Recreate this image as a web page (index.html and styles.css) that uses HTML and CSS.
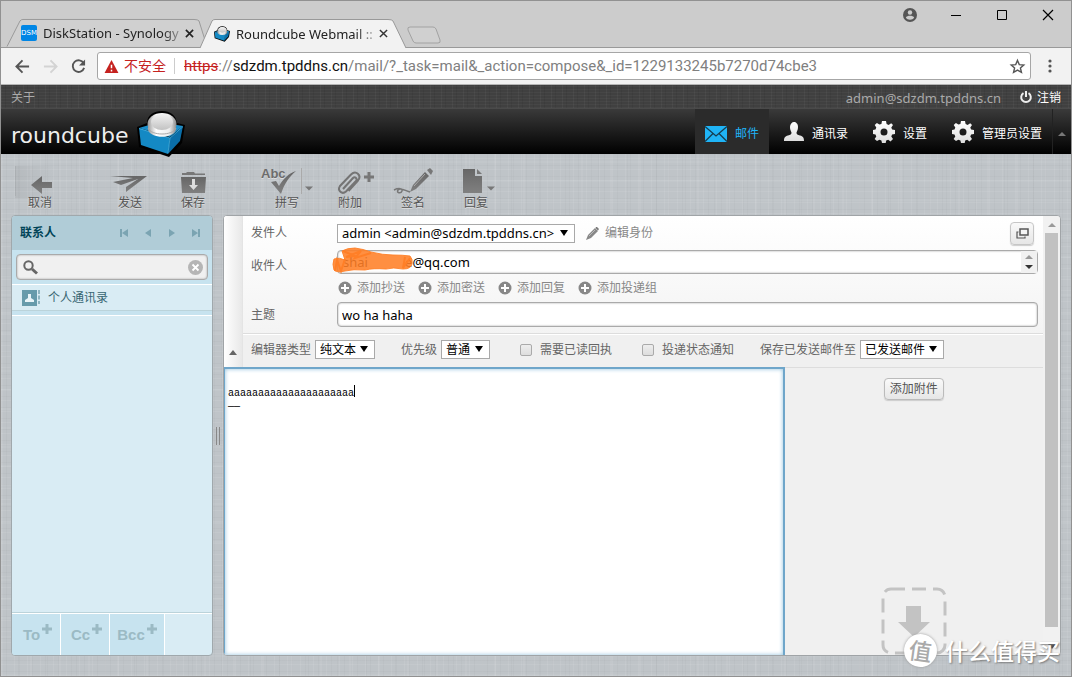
FILE: index.html
```html
<!DOCTYPE html>
<html lang="zh-CN">
<head>
<meta charset="utf-8">
<title>Roundcube Webmail :: 撰写</title>
<link rel="stylesheet" href="styles.css">
</head>
<body>
<svg class="defs" aria-hidden="true">
  <defs>
    <linearGradient id="grey" x1="0" y1="0" x2="0" y2="1"><stop offset="0" stop-color="#666"/><stop offset="1" stop-color="#808080"/></linearGradient>
    <linearGradient id="white" x1="0" y1="0" x2="0" y2="1"><stop offset="0" stop-color="#fff"/><stop offset="1" stop-color="#ddd"/></linearGradient>
    <linearGradient id="band" x1="0" y1="0" x2="1" y2="0"><stop offset="0" stop-color="#999"/><stop offset=".3" stop-color="#fff"/><stop offset=".75" stop-color="#eee"/><stop offset="1" stop-color="#8a8a8a"/></linearGradient>
    <linearGradient id="dish" x1="0" y1="0" x2="0" y2="1"><stop offset="0" stop-color="#f2f2f2"/><stop offset="1" stop-color="#c2c2c2"/></linearGradient>
    <symbol id="cube" viewBox="0 0 48 46">
      <path d="M0 16 10 12C10 4 17 0 25 0s14 4 15 12l8 2-3 18-13 14L2 36Z" fill="#000"/>
      <path d="M2 17 22 11l24 4-13 11Z" fill="#1c8fcb"/>
      <path d="M2 17 33 27 31 43 4 34Z" fill="#1489c4"/>
      <path d="M33 27 46 15 43 30 31 43Z" fill="#0a6ea8"/>
      <path d="M2 17.500 33 27 46 15.500M33 27 31 42" fill="none" stroke="#45b0e0" stroke-width=".8"/>
      <path d="M11 13v6c3 9 25 9 28 0v-6Z" fill="url(#band)"/>
      <ellipse cx="25" cy="13" rx="14.500" ry="11" fill="url(#band)"/>
      <path d="M11 17c3 8 25 8 28 0" fill="none" stroke="#aaa"/>
      <ellipse cx="25" cy="11" rx="11" ry="8" fill="url(#dish)"/>
    </symbol>
    <symbol id="gear" viewBox="0 0 22 22">
      <path fill="url(#white)" fill-rule="evenodd" d="M9 0h4l.6 3 2 .9L18.200 2.200l1.800 1.800-1.700 2.500.8 2 2.900.5v4l-2.900.6-.8 2 1.700 2.500-2.500 2.400-2.300-1.700-2 .8-.5 2.400H9l-.6-2.500-2-.8L4 20.100 1.600 17.900l1.700-2.500-.8-2L0 13V9l2.500-.5.8-2L1.700 4l2.200-2.100 2.500 1.700 2-.7ZM11 7.500a3.500 3.500 0 1 0 0 7 3.500 3.500 0 0 0 0-7Z"/>
    </symbol>
    <symbol id="plus" viewBox="0 0 14 14"><circle cx="7" cy="7" r="6.500" fill="#888"/><path d="M7 3v8M3 7h8" stroke="#fff" stroke-width="2"/></symbol>
  </defs>
</svg>
<div class="window">
  <div class="titlebar">
    <div class="tabs">
      <div class="tab tab-idle">
        <svg class="tab-shape" viewBox="0 0 202 29" preserveAspectRatio="none"><path d="M1 28.500 14 2Q15 .5 17 .5H188Q192 .5 193 2L201 28.500" fill="#d0d0d0" stroke="#999"/></svg>
        <span class="dsm">DSM</span><span class="tab-title">DiskStation - Synology</span>
        <button class="tab-close" aria-label="关闭标签页"><svg viewBox="0 0 10 10"><path d="M1 1l8 8M9 1 1 9" stroke="#222" stroke-width="1.800"/></svg></button>
      </div>
      <div class="tab tab-active">
        <svg class="tab-shape" viewBox="0 0 206 29" preserveAspectRatio="none"><path d="M0 29 12 2Q13 .5 15 .5H188Q192 .5 193 2L206 29" fill="#f2f2f2" stroke="#999"/></svg>
        <svg class="tab-cube"><use href="#cube"/></svg><span class="tab-title">Roundcube Webmail ::</span>
        <button class="tab-close" aria-label="关闭标签页"><svg viewBox="0 0 10 10"><path d="M1 1l8 8M9 1 1 9" stroke="#333" stroke-width="1.600"/></svg></button>
      </div>
      <button class="new-tab" aria-label="新标签页"><svg viewBox="0 0 36 18"><path d="M4 1H27Q29 1 30 3L34 14Q35 17 32 17H10Q8 17 7 15L2 4Q1 1 4 1Z" fill="#d0d0d0" stroke="#a2a2a2"/></svg></button>
    </div>
    <div class="win-controls">
      <button aria-label="用户"><svg viewBox="0 0 14 14"><circle cx="7" cy="7" r="7" fill="#555"/><circle cx="7" cy="4.500" r="2.200" fill="#ccc"/><path d="M2.800 9.500C4 7.200 10 7.200 11.200 9.500 9.500 12.500 4.500 12.500 2.800 9.500Z" fill="#ccc"/></svg></button>
      <button aria-label="最小化"><svg viewBox="0 0 14 14"><path d="M2 7.500h10" stroke="#000"/></svg></button>
      <button aria-label="最大化"><svg viewBox="0 0 14 14"><path d="M2.500 2.500h9v9h-9Z" fill="none" stroke="#000"/></svg></button>
      <button aria-label="关闭"><svg viewBox="0 0 14 14"><path d="M2 2l10 10M12 2 2 12" stroke="#000" stroke-width="1.200"/></svg></button>
    </div>
  </div>
  <div class="addressbar">
    <button class="nav-btn" aria-label="后退"><svg viewBox="0 0 16 16"><path d="M15 8H2M8 1.500 1.500 8 8 14.500" fill="none" stroke="#555" stroke-width="2"/></svg></button>
    <button class="nav-btn" aria-label="前进"><svg viewBox="0 0 16 16"><path d="M1 8h13M8 1.500 14.500 8 8 14.500" fill="none" stroke="#d3d3d3" stroke-width="2"/></svg></button>
    <button class="nav-btn" aria-label="刷新"><svg viewBox="0 0 16 16"><path d="M13.500 4.500A6.200 6.200 0 1 0 14 9.500" fill="none" stroke="#555" stroke-width="2"/><path d="M15 .5V7H8.500Z" fill="#555"/></svg></button>
    <div class="omnibox">
      <svg class="warn" viewBox="0 0 15 14"><path d="M7.500 0 15 14H0Z" fill="#c5221f"/><path d="M7.500 5v4M7.500 10.500v2" stroke="#fff" stroke-width="1.600"/></svg>
      <span class="unsafe">不安全</span>
      <span class="url"><s>https</s>://<b>sdzdm.tpddns.cn</b>/mail/?_task=mail&amp;_action=compose&amp;_id=1229133245b7270d74cbe3</span>
      <button class="star" aria-label="收藏"><svg viewBox="0 0 16 16"><path d="M8 1.500 9.900 6l4.800.4-3.600 3.200 1.100 4.700L8 11.800l-4.200 2.500 1.100-4.700L1.300 6.400 6.100 6Z" fill="none" stroke="#555" stroke-width="1.500"/></svg></button>
    </div>
    <button class="kebab" aria-label="菜单"><svg viewBox="0 0 4 14"><circle cx="2" cy="2" r="1.600" fill="#555"/><circle cx="2" cy="7" r="1.600" fill="#555"/><circle cx="2" cy="12" r="1.600" fill="#555"/></svg></button>
  </div>

  <div class="topline">
    <a href="#about">关于</a>
    <span class="user">admin@sdzdm.tpddns.cn</span>
    <a class="logout" href="#logout"><svg viewBox="0 0 12 12"><path d="M3.500 2.200a4.800 4.800 0 1 0 5 0M6 0v6" fill="none" stroke="#eee" stroke-width="2"/></svg>注销</a>
  </div>
  <header class="header">
    <div class="logo"><span>roundcube</span><svg><use href="#cube"/></svg></div>
    <nav class="taskbar">
      <a class="selected" href="#mail"><svg viewBox="0 0 22 16"><path d="M0 0h22v16H0Z" fill="#1fb4f7"/><path d="M0 .5 11 10 22 .5M0 15.500 8 7.500M22 15.500 14 7.500" fill="none" stroke="#173d50" stroke-width="1.300"/></svg>邮件</a>
      <a href="#contacts"><svg class="person" viewBox="0 0 20 20"><path d="M6 5c0-3 2-5 4-5s4.200 2 4 5c0 3-1 4-1.500 5.500 0 2 1 2.500 3.500 3 3 .8 4 2 4 5.500H0c0-3.500 1-4.700 4-5.500 2.500-.5 3.500-1 3.500-3C7 9 6 8 6 5Z" fill="url(#white)"/></svg>通讯录</a>
      <a href="#settings"><svg class="cog"><use href="#gear"/></svg>设置</a>
      <a href="#admin"><svg class="cog"><use href="#gear"/></svg>管理员设置</a>
      <button class="fold" aria-label="收起"><svg viewBox="0 0 8 4"><path d="M0 4 4 0l4 4Z" fill="#777"/></svg></button>
    </nav>
  </header>

  <div class="toolbar">
    <button class="tool cancel"><svg viewBox="0 0 62 30"><path d="M22 19 33 10v6h10v6H33v6Z" fill="url(#grey)"/></svg>取消</button>
    <button class="tool group"><svg viewBox="0 0 62 30"><path d="M11 10H48L27 26V21L39 13 22 19 14 16 34 12Z" fill="url(#grey)"/></svg>发送</button>
    <button class="tool"><svg viewBox="0 0 62 30"><path d="M20 9V7h4l1-1h7l1 1.500h10V9Z" fill="#777"/><path d="M19 11H44L43 27H20Z" fill="url(#grey)"/><path d="M30 13h3v6h3l-4.500 5L27 19h3Z" fill="#ddd"/></svg>保存</button>
    <div class="tool-wrap group">
      <button class="tool"><svg viewBox="0 0 62 30"><text class="abc" x="5" y="12">Abc</text><path d="M15 16l5-1 3 5C27 13 33 7 40 5 33 11 28 18 25 28Z" fill="url(#grey)"/><path d="M45.500 2v26" stroke="#aaa"/></svg>拼写</button>
      <button class="drop" aria-label="拼写选项"><svg viewBox="0 0 8 5"><path d="M0 .5h8L4 4.500Z" fill="#777"/></svg></button>
    </div>
    <button class="tool"><svg viewBox="0 0 62 30"><path d="M24 23 34 12c2-2 5 1 3 3L27 25.500c-4 3.500-9-1-6-5.500L32 8.500c5-5 11 1 7 6L29.500 25" fill="none" stroke="#747474" stroke-width="2"/><path d="M45 11h10M50 6v10" stroke="#777" stroke-width="3"/></svg>附加</button>
    <button class="tool"><svg viewBox="0 0 62 30"><path d="M12 24c4-2 9-2 8 1s-6 2-4-1 8 1 12 2" fill="none" stroke="#777" stroke-width="1.500"/><path d="M28 26 31 19 43 6l4 4L34 23Z" fill="url(#grey)"/><path d="M45 4l3-2 3 3-2 4Z" fill="#777"/><path d="M32 20 43 8" stroke="#aaa"/></svg>签名</button>
    <div class="tool-wrap">
      <button class="tool"><svg viewBox="0 0 62 30"><path d="M18 3H30V10h7V27H18Z" fill="url(#grey)"/><path d="M32 3 37 8h-5Z" fill="#777"/></svg>回复</button>
      <button class="drop" aria-label="回复选项"><svg viewBox="0 0 8 5"><path d="M0 .5h8L4 4.500Z" fill="#777"/></svg></button>
    </div>
  </div>

  <main class="main">
    <aside class="contacts">
      <div class="contacts-head">
        <h2>联系人</h2>
        <div class="pager">
          <button aria-label="第一页"><svg viewBox="0 0 10 10"><path d="M1 1h2v8H1ZM9 1v8L3 5Z"/></svg></button>
          <button aria-label="上一页"><svg viewBox="0 0 10 10"><path d="M8 1v8L2 5Z"/></svg></button>
          <button aria-label="下一页"><svg viewBox="0 0 10 10"><path d="M2 1v8l6-4Z"/></svg></button>
          <button aria-label="最后一页"><svg viewBox="0 0 10 10"><path d="M7 1h2v8H7ZM1 1v8l6-4Z"/></svg></button>
        </div>
      </div>
      <div class="search">
        <div class="search-box">
          <svg viewBox="0 0 15 15"><circle cx="5.500" cy="5.500" r="4.200" fill="none" stroke="#666" stroke-width="2"/><path d="M9 9l5 4.500" stroke="#666" stroke-width="3"/></svg>
          <input type="text" aria-label="搜索联系人">
          <button aria-label="清除"><svg viewBox="0 0 15 15"><circle cx="7.500" cy="7.500" r="7.500" fill="#b5b5b5"/><path d="M4.500 4.500l6 6M10.500 4.500l-6 6" stroke="#fff" stroke-width="1.800"/></svg></button>
        </div>
      </div>
      <a class="book" href="#addressbook"><svg viewBox="0 0 18 16"><path d="M0 0h15v16H0Z" fill="#679bab"/><path d="M16 0h2v4h-2ZM16 5.500h2v4h-2ZM16 11h2v3h-2Z" fill="#8fb5c1"/><path d="M6 4h3v4l3 2v2H3v-2l3-2Z" fill="#e8f4f8"/></svg>个人通讯录</a>
      <div class="contact-list"></div>
      <div class="contact-actions">
        <button>To<sup><svg viewBox="0 0 10 10"><path d="M5 0v10M0 5h10" stroke="#9bbac4" stroke-width="3"/></svg></sup></button>
        <button>Cc<sup><svg viewBox="0 0 10 10"><path d="M5 0v10M0 5h10" stroke="#9bbac4" stroke-width="3"/></svg></sup></button>
        <button class="wide">Bcc<sup><svg viewBox="0 0 10 10"><path d="M5 0v10M0 5h10" stroke="#9bbac4" stroke-width="3"/></svg></sup></button>
      </div>
    </aside>
    <div class="splitter"></div>
    <form class="compose">
      <div class="compose-body">
        <div class="headers">
          <button type="button" class="headers-fold" aria-label="折叠选项"><svg viewBox="0 0 8 5"><path d="M0 5 4 0l4 5Z" fill="#666"/></svg></button>
          <div class="header-fields">
            <div class="fields">
              <label class="row-from" for="from">发件人</label>
              <div class="row-from">
                <span class="select from"><select id="from"><option>admin &lt;admin@sdzdm.tpddns.cn&gt;</option></select></span>
                <a class="identity" href="#identities"><svg viewBox="0 0 13 13"><path d="M0 13 2 8 9 1l3 3L5 11Z" fill="#888"/><path d="M10 0h1l2 2-1 1.500L9.500 1Z" fill="#777"/><path d="M3 9l6-6" stroke="#bbb"/></svg>编辑身份</a>
                <button type="button" class="popout" aria-label="在新窗口中打开"><svg viewBox="0 0 13 11"><path d="M4 1h8v6H4Z" fill="#f4f4f4" stroke="#555" stroke-width="1.500"/><path d="M2.500 4H1v6h8V8.500" fill="none" stroke="#555" stroke-width="1.200"/></svg></button>
              </div>
              <label for="to">收件人</label>
              <div class="to-box">
                <textarea id="to" rows="1">shai           e@qq.com</textarea>
                <div class="spin"><svg viewBox="0 0 8 16"><path d="M0 5 4 1l4 4Z" fill="#999"/><path d="M0 11h8l-4 4Z" fill="#333"/></svg></div>
                <svg class="scribble" viewBox="0 0 80 26"><path d="M9 3Q14 0 22 0 30 1 38 4 50 7 60 7 70 7 77 8 80 11 79 16 78 21 70 21 60 19 53 21 40 20 32 22 20 21 12 23 4 25 1 22-1 16 1 11 6 9 12 12Z" fill="#ff7f27" fill-opacity=".88" stroke="#ff7f27" stroke-opacity=".9"/><path d="M2 23 4 12 8 23 12 11M10 3 22 8 13 9 28 3 22 10 38 5M72 9 70 20 77 10" fill="none" stroke="#ff7f27" stroke-width="2"/></svg>
              </div>
              <div class="add-links">
                <a href="#cc"><svg><use href="#plus"/></svg>添加抄送</a>
                <a href="#bcc"><svg><use href="#plus"/></svg>添加密送</a>
                <a href="#replyto"><svg><use href="#plus"/></svg>添加回复</a>
                <a href="#followup"><svg><use href="#plus"/></svg>添加投递组</a>
              </div>
              <label for="subject">主题</label>
              <input id="subject" class="subject" type="text" value="wo ha haha">
            </div>
            <div class="options">
              <label>编辑器类型<span class="select type"><select><option>纯文本</option></select></span></label>
              <label>优先级<span class="select prio"><select><option>普通</option></select></span></label>
              <label class="check"><input type="checkbox">需要已读回执</label>
              <label class="check"><input type="checkbox">投递状态通知</label>
              <label>保存已发送邮件至<span class="select store"><select><option>已发送邮件</option></select></span></label>
            </div>
          </div>
        </div>
        <div class="editor-row">
          <div class="editor"><textarea aria-label="正文" spellcheck="false">

aaaaaaaaaaaaaaaaaaaaa
——</textarea><i class="caret"></i></div>
          <div class="attachments">
            <button type="button" class="attach">添加附件</button>
            <svg class="dropzone" viewBox="0 0 66 68"><rect x="2" y="2" width="62" height="64" rx="8" fill="none" stroke="#c3c3c3" stroke-width="3" stroke-dasharray="14 7"/><path d="M25 19h15v16h9L33 50 17 35h8Z" fill="#c3c3c3"/></svg>
          </div>
        </div>
      </div>
      <div class="scrollbar"><svg viewBox="0 0 8 5"><path d="M0 5 4 1l4 4Z" fill="#999"/></svg><div class="thumb"></div><svg viewBox="0 0 8 5"><path d="M0 0h8L4 5Z" fill="#444"/></svg></div>
    </form>
  </main>
  <div class="watermark"><span class="mark">值</span><span>什么值得买</span></div>
</div>
</body>
</html>
```

FILE: styles.css
```css
* { box-sizing: border-box; }
body {
  margin: 0;
  font: 12px/16px "Noto Sans", "Noto Sans CJK SC", sans-serif;
  color: #666;
}
button, input, select, textarea { font: inherit; color: inherit; margin: 0; }
button { padding: 0; border: 0; background: none; }
a { color: inherit; text-decoration: none; }
svg { display: block; flex: none; overflow: visible; }
.defs { position: absolute; width: 0; height: 0; }

.window {
  position: relative;
  display: flex;
  flex-direction: column;
  height: 100vh;
  border: 1px solid #919191;
  background-color: #bfc4c8;
  background-image:
    repeating-linear-gradient(90deg, rgba(255,255,255,.07) 0 1px, transparent 1px 5px, rgba(0,0,0,.02) 5px 6px, transparent 6px 13px),
    repeating-linear-gradient(90deg, rgba(255,255,255,.06) 0 2px, transparent 2px 17px, rgba(0,0,0,.02) 17px 18px, transparent 18px 29px),
    repeating-linear-gradient(0deg, rgba(255,255,255,.07) 0 1px, transparent 1px 4px, rgba(0,0,0,.02) 4px 5px, transparent 5px 11px),
    repeating-linear-gradient(0deg, rgba(255,255,255,.05) 0 2px, transparent 2px 19px);
}

/* Browser chrome */
.titlebar {
  display: flex;
  justify-content: space-between;
  height: 47px;
  background: #ccc;
  border-bottom: 1px solid #999;
}
.tabs { display: flex; align-items: flex-end; padding-left: 5px; }
.tab {
  position: relative;
  display: flex;
  align-items: center;
  width: 202px;
  height: 28px;
  padding: 0 14px 0 15px;
  color: #222;
  font-size: 13px;
}
.tab > * { position: relative; }
.tab .tab-shape { position: absolute; left: 0; top: 0; width: 100%; height: 100%; }
.tab-active { width: 206px; height: 29px; margin: 0 0 -1px -8px; padding: 0 18px 0 14px; }
.dsm {
  width: 16px;
  height: 16px;
  border-radius: 2px;
  background: #0086e5;
  color: #fff;
  font: 7px/16px "DejaVu Sans", sans-serif;
  text-align: center;
}
.tab-cube { width: 16px; height: 16px; }
.tab-title {
  flex: 1;
  margin: 0 2px 0 6px;
  white-space: nowrap;
  -webkit-mask-image: linear-gradient(90deg, #000 85%, rgba(0,0,0,.2));
  mask-image: linear-gradient(90deg, #000 85%, rgba(0,0,0,.2));
}
.tab-close svg { width: 9px; height: 9px; }
.new-tab { align-self: flex-end; margin-bottom: 3px; }
.new-tab svg { width: 36px; height: 18px; }
.win-controls { display: flex; height: 28px; align-items: center; }
.win-controls button { width: 46px; display: flex; justify-content: center; }
.win-controls svg { width: 14px; height: 14px; }

.addressbar {
  display: flex;
  align-items: center;
  height: 37px;
  flex: none;
  padding-left: 14px;
  background: #f2f2f2;
  border-bottom: 1px solid #b5b5b5;
}
.nav-btn { width: 28px; }
.nav-btn svg { width: 15px; height: 15px; }
.omnibox {
  display: flex;
  flex: 1;
  align-items: center;
  min-width: 0;
  height: 28px;
  margin-left: -2px;
  padding: 0 5px 0 6px;
  border: 1px solid #a6a6a6;
  border-radius: 3px;
  background: #fff;
}
.warn { width: 15px; height: 13px; }
.unsafe {
  margin: 0 9px 0 5px;
  padding-right: 8px;
  border-right: 1px solid #ccc;
  color: #c5221f;
  font-size: 14px;
}
.url { flex: 1; overflow: hidden; white-space: nowrap; color: #808080; font: 15px/20px Roboto, "Noto Sans", sans-serif; }
.url s { color: #c5221f; }
.url b { color: #111; font-weight: 400; }
.star svg { width: 15px; height: 15px; }
.kebab { width: 38px; display: flex; justify-content: center; }
.omnibox + .kebab { margin-right: 2px; }
.kebab svg { width: 4px; height: 14px; }

/* Application header */
.topline {
  display: flex;
  align-items: center;
  flex: none;
  height: 23px;
  padding: 2px 10px 0;
  background-color: #404040;
  background-image:
    repeating-linear-gradient(90deg, rgba(255,255,255,.04) 0 1px, transparent 1px 4px, rgba(0,0,0,.06) 4px 5px, transparent 5px 11px),
    repeating-linear-gradient(0deg, rgba(255,255,255,.03) 0 1px, transparent 1px 3px);
  color: #aaa;
}
.user { margin-left: auto; font-size: 13px; }
.logout { display: flex; align-items: center; gap: 5px; margin-left: 19px; color: #fff; }
.logout svg { width: 12px; height: 12px; margin-top: -2px; }
.header {
  display: flex;
  justify-content: space-between;
  flex: none;
  height: 46px;
  border-top: 1px solid #4a4a4a;
  background: linear-gradient(#3a3a3a, #000);
}
.logo {
  display: flex;
  align-items: flex-start;
  gap: 9px;
  padding-left: 10px;
  color: #eee;
  font: 22px/26px "DejaVu Sans", sans-serif;
}
.logo span { margin-top: 14px; }
.logo svg { width: 48px; height: 46px; margin-top: 2px; z-index: 1; }
.taskbar { display: flex; gap: 5px; color: #fff; }
.taskbar a { display: flex; align-items: center; gap: 8px; padding: 4px 10px 0; }
.taskbar .selected { background: #2b2b2b; color: #1fb4f7; }
.taskbar a svg { width: 22px; height: 16px; }
.taskbar .person { width: 20px; height: 20px; margin-top: -4px; }
.taskbar .cog { height: 22px; margin-top: -4px; }
.fold { width: 19px; margin-left: -5px; border-left: 1px solid #222; display: flex; align-items: center; justify-content: center; padding-top: 4px; }
.fold svg { width: 8px; height: 4px; }

/* Toolbar */
.toolbar { display: flex; flex: none; gap: 1px; height: 61px; padding: 12px 8px 0; }
.tool { width: 62px; display: flex; flex-direction: column; align-items: center; color: #555; line-height: 14px; text-shadow: 0 1px 0 #ddd; }
.tool svg { width: 62px; height: 30px; }
.abc { font: bold 13px "Liberation Sans", sans-serif; fill: #6c6c6c; }
.cancel { background: linear-gradient(90deg, rgba(0,0,0,.12), transparent) no-repeat 6px 0 / 1px 30px, linear-gradient(90deg, rgba(0,0,0,.05), transparent) no-repeat 6px 0 / 40px 32px; }
.group { margin-left: 27px; }
.tool-wrap { position: relative; display: flex; }
.tool-wrap.group { margin-left: 31px; }
.drop { position: absolute; right: 11px; top: 19px; padding: 1px; }
.tool-wrap.group .drop { right: 4px; }
.drop svg { width: 8px; height: 5px; }

/* Panels */
.main { display: flex; flex: 1; min-height: 0; padding: 0 10px 20px; }
.contacts {
  display: flex;
  flex-direction: column;
  width: 202px;
  overflow: hidden;
  border: 1px solid #a0a8ac;
  border-radius: 4px;
  background: #d9ecf4;
  color: #376572;
}
.contacts-head { display: flex; align-items: center; justify-content: space-between; height: 34px; padding: 0 11px 0 8px; background: #b0ccd7; }
.contacts-head h2 { margin: 0; color: #004458; font-size: 12px; font-weight: 700; }
.pager { display: flex; gap: 14px; }
.pager svg { width: 10px; height: 10px; fill: #7ba4b2; }
.search { height: 35px; padding: 4px; border-bottom: 1px solid #fff; background: #c7e3ef; }
.search-box { display: flex; align-items: center; height: 26px; padding: 0 4px 0 6px; border: 1px solid #aaa; border-radius: 4px; background: #f0f0f0; box-shadow: inset 0 0 2px #999; }
.search-box svg { width: 15px; height: 15px; }
.search-box input { flex: 1; min-width: 0; border: 0; outline: 0; background: none; }
.book { display: flex; align-items: center; gap: 8px; height: 26px; padding-left: 10px; border-bottom: 1px solid #bbd3da; }
.book svg { width: 18px; height: 16px; }
.contact-list { flex: 1; border-top: 4px solid #c7e3ef; border-bottom: 1px solid #bbd3da; box-shadow: inset 0 1px 0 #fff; }
.contact-actions { display: flex; height: 42px; border-top: 1px solid #fff; }
.contact-actions button { display: flex; align-items: center; justify-content: center; gap: 2px; width: 49px; padding-left: 3px; border-right: 1px solid #fff; background: #c7e3ef; color: #9bbac4; font: bold 15px/20px "Liberation Sans", sans-serif; }
.contact-actions .wide { width: 55px; padding-left: 0; }
.contact-actions sup { align-self: flex-start; margin-top: 10px; }
.contact-actions svg { width: 10px; height: 10px; }
.splitter { width: 10px; background: linear-gradient(90deg, #888 0 1px, transparent 1px 3px, #888 3px 4px) no-repeat 3px 50% / 4px 18px; }

.compose { display: flex; flex: 1; min-width: 0; overflow: hidden; border: 1px solid #a0a4a7; border-radius: 4px; background: #f0f0f0; }
.compose-body { display: flex; flex: 1; flex-direction: column; min-width: 0; }
.headers { display: flex; flex: none; border-bottom: 1px solid #ddd; background: linear-gradient(#fff, #f0f0f0); }
.headers-fold { display: flex; align-items: flex-end; justify-content: center; width: 19px; padding-bottom: 12px; border-right: 1px solid #e4e4e4; background: linear-gradient(90deg, #fff, #e8e8e8); }
.headers-fold svg { width: 8px; height: 5px; }
.header-fields { flex: 1; min-width: 0; }
.fields {
  display: grid;
  grid-template-columns: 86px minmax(0, 1fr);
  grid-template-rows: 34px 24px 28px 25px;
  align-items: center;
  padding: 0 5px 6px 8px;
  border-bottom: 1px solid #ddd;
}
.row-from { display: flex; align-items: center; }
.select { position: relative; display: inline-flex; height: 19px; background: #fff; border: 1px solid #a9a9a9; }
.select::after { content: ""; position: absolute; right: 6px; top: 5px; border: 4px solid transparent; border-top: 6px solid #000; border-bottom: 0; pointer-events: none; }
.select select { width: 100%; padding: 0 0 0 4px; border: 0; background: none; color: #000; appearance: none; line-height: 17px; }
.from { width: 238px; font-size: 13px; }
.identity { display: flex; align-items: center; gap: 6px; margin-left: 11px; color: #888; }
.identity svg { width: 13px; height: 13px; }
.popout { display: flex; align-items: center; justify-content: center; width: 24px; height: 23px; margin: 0 4px 0 auto; border: 1px solid #c6c6c6; border-radius: 4px; background: linear-gradient(#f9f9f9, #e6e6e6); box-shadow: 0 1px 1px #ccc; }
.popout svg { width: 13px; height: 11px; }
.fields label[for="to"] { padding-top: 8px; }
.to-box { position: relative; display: flex; align-self: stretch; border: 1px solid #aaa; border-radius: 4px; background: #fff; box-shadow: inset 0 0 2px #999; }
.to-box textarea { flex: 1; height: 22px; padding: 3px 5px; border: 0; outline: 0; background: none; color: #000; font-size: 13px; line-height: 16px; resize: none; overflow: hidden; white-space: pre; }
.spin { display: flex; align-items: center; justify-content: center; width: 16px; background: #f1f1f1; }
.spin svg { width: 8px; height: 16px; }
.scribble { position: absolute; left: -5px; top: -3px; width: 80px; height: 26px; }
.add-links { grid-column: 2; display: flex; gap: 13px; padding-left: 1px; color: #888; }
.add-links a { display: flex; align-items: center; gap: 5px; }
.add-links svg { width: 14px; height: 14px; }
.subject { width: 100%; height: 25px; padding: 0 4px; border: 1px solid #aaa; border-radius: 4px; background: #fff; box-shadow: inset 0 0 2px #999; color: #000; font-size: 13px; }
.options { display: flex; align-items: center; gap: 26px; height: 33px; padding: 0 8px 3px; border-top: 1px solid #fff; background: #f0f0f0; white-space: nowrap; }
.options label { display: flex; align-items: center; gap: 4px; }
.options .check { gap: 8px; margin-left: 4px; }
.check input { appearance: none; width: 12px; height: 12px; border: 1px solid #aaa; border-radius: 2px; background: linear-gradient(#eee, #ddd); }
.type { width: 60px; }
.prio { width: 49px; }
.store { width: 84px; }
.editor-row { display: flex; flex: 1; min-height: 0; }
.editor { position: relative; flex: 561; margin: -1px 0 0 -1px; display: flex; }
.editor textarea { flex: 1; padding: 5px 3px; border: 2px solid #6fa6ca; border-bottom: 0; outline: 0; background: #fff; box-shadow: inset 0 0 4px #8fc0dd; color: #000; font: 10px/13px "Liberation Mono", monospace; resize: none; overflow: hidden; }
.caret { position: absolute; left: 131px; top: 18px; width: 1px; height: 12px; background: #000; }
.attachments { flex: 258; display: flex; flex-direction: column; align-items: center; justify-content: space-between; padding-top: 10px; }
.attach { height: 22px; padding: 0 5px; border: 1px solid #bbb; border-radius: 4px; background: linear-gradient(#fafafa, #e6e6e6); box-shadow: 0 1px 1px #ccc; color: #555; }
.dropzone { width: 66px; height: 68px; }
.scrollbar { display: flex; flex-direction: column; align-items: center; width: 17px; padding: 6px 0; background: #f1f1f1; }
.scrollbar svg { width: 8px; height: 5px; }
.thumb { flex: 1; width: 13px; margin: 6px 0 17px; background: #c1c1c1; }

.watermark { position: absolute; right: 11px; bottom: 9px; display: flex; align-items: center; gap: 8px; color: #fff; font: 500 23px/34px "Noto Sans CJK SC", sans-serif; text-shadow: 1px 1px 2px #777; pointer-events: none; }
.mark { width: 33px; height: 33px; border-radius: 50%; background: #fff; color: #aaa; line-height: 33px; text-align: center; text-shadow: none; box-shadow: 0 0 3px #999; transform: rotate(8deg); }
```
